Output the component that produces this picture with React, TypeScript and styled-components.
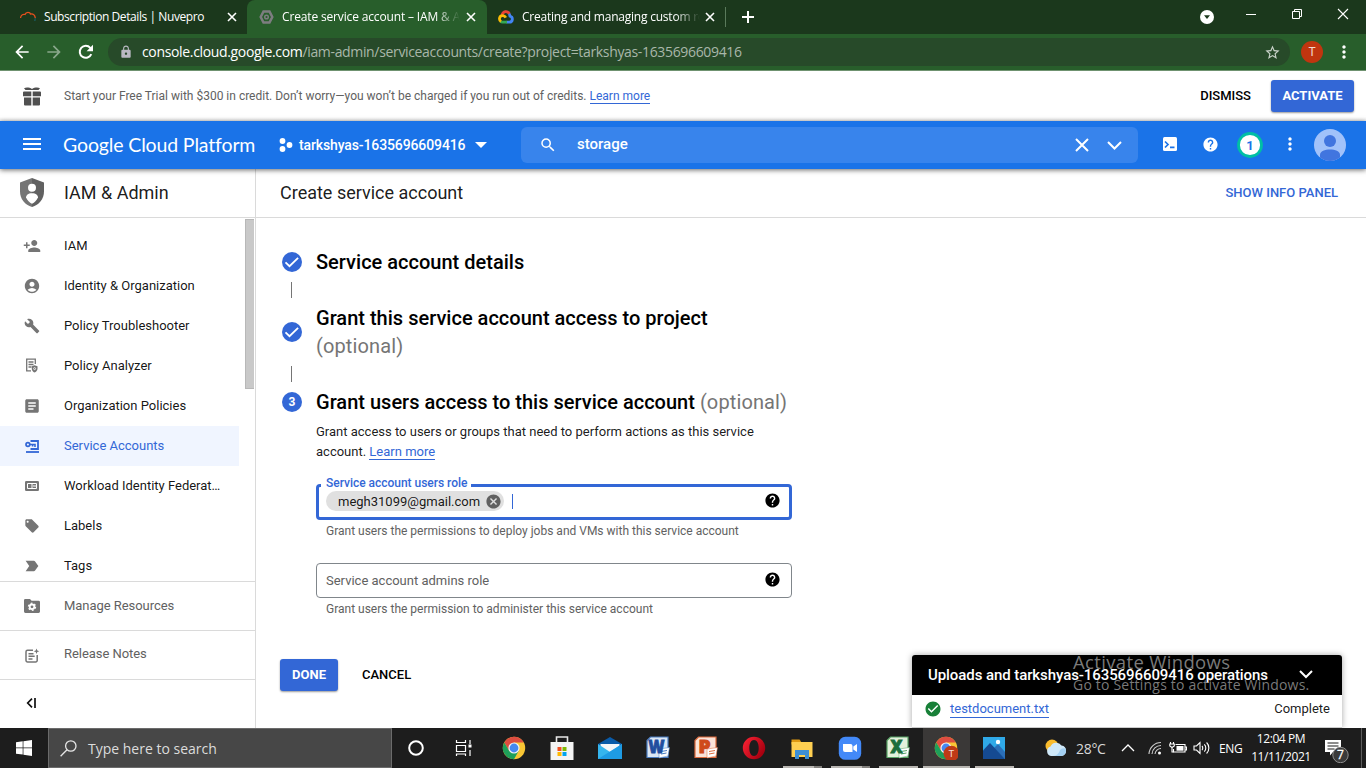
import React from "react";
import styled, { createGlobalStyle, css } from "styled-components";
import {
  MdAccountCircle, MdArticle, MdArrowBack, MdArrowForward, MdBuild, MdCancel, MdCheckCircle,
  MdHelp, MdLabelImportant, MdLocalOffer, MdLock, MdMoreVert, MdPersonAdd,
  MdSearch, MdStarBorder,
} from "react-icons/md";

const blue = "#3367d6";
const ui = `"Open Sans", "Noto Sans", sans-serif`;

const Global = createGlobalStyle`
  * { box-sizing: border-box; }
  body { margin: 0; background: #fff; font-family: Roboto, sans-serif; overflow: hidden; }
  svg { display: block; flex: none; }
`;

const Screen = styled.div`
  position: relative;
  width: 1366px;
  height: 768px;
  display: flex;
  flex-direction: column;
  overflow: hidden;
  white-space: nowrap;
  color: rgba(0, 0, 0, 0.9);
`;

const Label = styled.span<{ $size: number; $ls?: number; $weight?: number; $color?: string; $lift?: number }>`
  font-size: ${(p) => p.$size}px;
  letter-spacing: ${(p) => p.$ls ?? 0}px;
  font-weight: ${(p) => p.$weight ?? 400};
  padding-bottom: ${(p) => p.$lift ?? 0}px;
  ${(p) => p.$color && `color: ${p.$color};`}
`;

/* ---------- browser frame ---------- */
const TabStrip = styled.div`
  height: 34px;
  flex: none;
  display: flex;
  background: #1b381c;
  font-family: ${ui};
  color: #fff;
`;
const Tab = styled.div<{ $width: number; $active?: boolean; $pad: number }>`
  width: ${(p) => p.$width}px;
  height: 34px;
  display: flex;
  align-items: center;
  padding-left: ${(p) => p.$pad}px;
  ${(p) => p.$active && css`background: #285e2b; border-radius: 8px 8px 0 0;`}
`;
const TabTitle = styled.div<{ $width: number; $ls: number; $fade?: boolean }>`
  width: ${(p) => p.$width}px;
  margin-left: 8px;
  overflow: hidden;
  font-size: 12px;
  line-height: 20px;
  letter-spacing: ${(p) => p.$ls}px;
  ${(p) => p.$fade && "mask-image: linear-gradient(90deg, #000 86%, transparent);"}
`;
const TabClose = styled.div<{ $gap?: number }>`
  margin-left: auto;
  margin-right: ${(p) => p.$gap ?? 10}px;
`;
const NewTab = styled.div`
  height: 20px;
  margin-top: 7px;
  border-left: 1px solid #5a7a5b;
  padding: 4px 0 0 16px;
`;
const WindowButtons = styled.div`
  margin-left: auto;
  display: flex;
  align-items: flex-start;
`;
const WindowButton = styled.div<{ $width: number; $top: number }>`
  width: ${(p) => p.$width}px;
  padding-top: ${(p) => p.$top}px;
  display: flex;
  justify-content: center;
`;
const AddressRow = styled.div`
  height: 37px;
  flex: none;
  display: flex;
  align-items: center;
  padding-left: 12px;
  background: #285e2b;
  border-bottom: 1px solid #6f9270;
  color: #fff;
`;
const NavIcon = styled.div<{ $dim?: boolean }>`
  width: 32px;
  opacity: ${(p) => (p.$dim ? 0.45 : 1)};
`;
const UrlBar = styled.div`
  width: 1182px;
  height: 28px;
  border-radius: 14px;
  background: #274a29;
  display: flex;
  align-items: center;
  padding: 0 9px 0 11px;
  font-family: ${ui};
  font-size: 14px;
  color: #a9b7a9;
  b { font-weight: 400; color: #fff; }
`;
const Url = styled.div`
  flex: 1;
  margin-left: 9px;
  padding-bottom: 1px;
  letter-spacing: -0.34px;
`;
const Profile = styled.div`
  width: 22px;
  height: 22px;
  margin: 0 11px;
  border-radius: 50%;
  background: #c0350f;
  color: #f3d9d2;
  font-size: 12px;
  line-height: 22px;
  text-align: center;
`;

/* ---------- promo and product header ---------- */
const Promo = styled.div`
  height: 50px;
  flex: none;
  display: flex;
  align-items: center;
  padding: 0 12px 0 23px;
  background: linear-gradient(#fff 46px, #f1f1f1);
`;
const PromoText = styled.div`
  margin-left: 23px;
  flex: 1;
  font-size: 12px;
  color: #616161;
`;
const Link = styled.span`
  color: ${blue};
  border-bottom: 1px solid ${blue};
`;
const SolidButton = styled.div<{ $width: number }>`
  width: ${(p) => p.$width}px;
  height: 32px;
  border-radius: 3px;
  background: ${blue};
  color: #fff;
  font-size: 13px;
  font-weight: 700;
  line-height: 32px;
  text-align: center;
  box-shadow: 0 1px 2px rgba(0, 0, 0, 0.4);
`;
const Header = styled.div`
  position: relative;
  z-index: 1;
  height: 48px;
  flex: none;
  display: flex;
  align-items: center;
  padding-left: 23px;
  background: #1a73e8;
  color: #fff;
  box-shadow: 0 1px 5px rgba(0, 0, 0, 0.6);
`;
const Lift = styled.div`
  padding-bottom: 2px;
`;
const Brand = styled.div`
  width: 216px;
  margin-left: 22px;
  padding-bottom: 2px;
  font-family: Lato, sans-serif;
  font-size: 19.5px;
  letter-spacing: -0.14px;
`;
const Project = styled.div`
  width: 242px;
  display: flex;
  align-items: center;
`;
const SearchBox = styled.div`
  width: 617px;
  height: 36px;
  border-radius: 6px;
  background: #3884ec;
  display: flex;
  align-items: center;
  padding: 0 15px 0 18px;
`;
const SearchText = styled.div`
  flex: 1;
  margin-left: 20px;
  padding-bottom: 2px;
  font-size: 15px;
  font-weight: 500;
`;
const HeaderIcons = styled.div`
  display: flex;
  padding-left: 12px;
`;
const HeaderIcon = styled.div<{ $lift?: boolean }>`
  width: 40px;
  height: 32px;
  display: flex;
  align-items: center;
  justify-content: center;
  padding-bottom: ${(p) => (p.$lift ? 2 : 0)}px;
`;

/* ---------- body ---------- */
const Body = styled.div`
  flex: 1;
  display: flex;
  min-height: 0;
`;
const Sidebar = styled.div`
  width: 256px;
  border-right: 1px solid #dadada;
  display: flex;
  flex-direction: column;
`;
const SideTitle = styled.div`
  height: 49px;
  flex: none;
  display: flex;
  align-items: center;
  padding: 0 0 1px 20px;
  gap: 20px;
  border-bottom: 1px solid #dadada;
`;
const SideScroll = styled.div`
  height: 363px;
  flex: none;
  display: flex;
  justify-content: space-between;
  overflow: hidden;
`;
const SideList = styled.div`
  width: 239px;
  padding-top: 8px;
`;
const ScrollThumb = styled.div`
  width: 9px;
  height: 170px;
  margin: 1px 1px 0 0;
  background: #c9c9c9;
  border: 1px solid #b8b8b8;
  border-right: 0;
`;
const SideItem = styled.div<{ $active?: boolean }>`
  height: 40px;
  display: flex;
  align-items: center;
  padding-left: 23px;
  color: ${(p) => (p.$active ? blue : "rgba(0,0,0,.92)")};
  background: ${(p) => (p.$active ? "#f0f5ff" : "none")};
  svg { color: ${(p) => (p.$active ? blue : "#757575")}; }
`;
const IconCell = styled.div`
  width: 18px;
  height: 18px;
  margin-right: 23px;
  display: flex;
  align-items: center;
  justify-content: center;
`;
const SideFoot = styled.div`
  height: 49px;
  flex: none;
  display: flex;
  align-items: center;
  padding-left: 23px;
  border-top: 1px solid #dadada;
  color: #616161;
  svg { color: #757575; }
`;
const Main = styled.div`
  flex: 1;
`;
const PageTitle = styled.div`
  height: 49px;
  display: flex;
  align-items: center;
  justify-content: space-between;
  padding: 0 28px 2px 24px;
  border-bottom: 1px solid #dadada;
`;
const Steps = styled.div`
  padding: 30px 0 0 26px;
  width: 536px;
`;
const Step = styled.div`
  display: flex;
  align-items: center;
  gap: 14px;
`;
const StepTitle = styled.div`
  font-size: 20px;
  line-height: 28px;
  font-weight: 500;
  letter-spacing: 0.01px;
  color: #000;
  span { color: #757575; font-weight: 400; letter-spacing: 0.12px; }
`;
const StepNumber = styled.div`
  width: 20px;
  height: 20px;
  border-radius: 50%;
  background: ${blue};
  color: #fff;
  font-size: 12px;
  font-weight: 700;
  line-height: 20px;
  text-align: center;
`;
const Connector = styled.div`
  width: 1px;
  height: 16px;
  margin: 6px 0 6px 9px;
  background: #757575;
`;
const StepBody = styled.div`
  padding: 6px 0 0 34px;
`;
const Description = styled.div`
  font-size: 13px;
  line-height: 20px;
`;
const Field = styled.div<{ $focus?: boolean }>`
  position: relative;
  height: ${(p) => (p.$focus ? 36 : 35)}px;
  margin-top: ${(p) => (p.$focus ? 22 : 24)}px;
  border: ${(p) => (p.$focus ? `3px solid ${blue}` : "1px solid #80868b")};
  border-radius: 4px;
  display: flex;
  align-items: center;
  padding: ${(p) => (p.$focus ? "0 8px 2px 7px" : "0 10px 1px 9px")};
`;
const FloatingLabel = styled.div`
  position: absolute;
  left: 2px;
  top: -12px;
  padding: 0 4px 0 5px;
  background: #fff;
  color: ${blue};
  font-size: 12px;
  font-weight: 500;
  line-height: 16px;
  letter-spacing: -0.02px;
`;
const Chip = styled.div`
  width: 178px;
  height: 20px;
  border-radius: 10px;
  background: #e0e0e0;
  display: flex;
  align-items: center;
  justify-content: space-between;
  padding: 0 2px 0 12px;
  font-size: 13px;
`;
const Caret = styled.div`
  width: 1px;
  height: 15px;
  margin-left: 8px;
  background: ${blue};
`;
const FieldEnd = styled.div`
  margin-left: auto;
  padding: 0 0.5px 1px 0;
  color: #000;
`;
const Helper = styled.div`
  margin-top: 3px;
  padding-left: 10px;
  height: 16px;
  font-size: 12px;
  line-height: 16px;
  color: #616161;
`;
const Actions = styled.div`
  display: flex;
  align-items: center;
  gap: 24px;
  padding: 42px 0 0 24px;
`;

/* ---------- notification panel ---------- */
const Panel = styled.div`
  position: absolute;
  left: 912px;
  top: 655px;
  width: 430px;
  height: 73px;
  border-radius: 3px 3px 0 0;
  background: #fff;
  border-bottom: 1px solid #ccc;
  box-shadow: 0 0 6px rgba(0, 0, 0, 0.35);
  overflow: hidden;
`;
const PanelHead = styled.div`
  height: 40px;
  background: #000;
  color: #fff;
  display: flex;
  align-items: center;
  justify-content: space-between;
  padding: 0 28px 0 16px;
`;
const PanelRow = styled.div`
  height: 27px;
  display: flex;
  align-items: center;
  padding: 0 12px;
  font-size: 13px;
`;
const FileLink = styled(Link)`
  margin: 2px auto 0 8px;
  line-height: 16px;
`;
const Watermark = styled.div`
  position: absolute;
  left: 1073px;
  top: 650px;
  font-family: ${ui};
  color: rgba(145, 145, 145, 0.85);
  display: flex;
  flex-direction: column;
  line-height: 23px;
`;

/* ---------- taskbar ---------- */
const Taskbar = styled.div`
  position: relative;
  height: 40px;
  flex: none;
  display: flex;
  background: #1d1d1d;
  color: #fff;
  font-family: ${ui};
`;
const Start = styled.div`
  width: 48px;
  display: flex;
  align-items: center;
  justify-content: center;
`;
const TaskSearch = styled.div`
  width: 344px;
  border: 1px solid #6b6b6b;
  background: #474747;
  display: flex;
  align-items: center;
  gap: 11px;
  padding-left: 11px;
  color: #dcdcdc;
`;
const Apps = styled.div`
  display: flex;
  flex: 1;
`;
const TaskApp = styled.div<{ $active?: boolean; $gap?: number }>`
  width: 48px;
  height: 40px;
  margin-left: ${(p) => p.$gap ?? 0}px;
  display: flex;
  flex-direction: column;
  align-items: center;
  justify-content: space-between;
  padding-top: 8px;
  ${(p) => p.$active && "background: linear-gradient(90deg, transparent 1px, #3a3837 1px);"}
`;
const Running = styled.div<{ $width: number; $more?: boolean }>`
  width: ${(p) => p.$width}px;
  height: 2px;
  background: ${(p) => (p.$more ? "linear-gradient(90deg, #b9b6b2 31px, #82807d 31px)" : "#b9b6b2")};
`;
const Tray = styled.div`
  width: 328px;
  display: flex;
  align-items: center;
  padding-left: 6px;
`;
const TrayCell = styled.div<{ $width: number }>`
  width: ${(p) => p.$width}px;
  flex: none;
`;
const Spacer = styled.div<{ $width: number }>`
  width: ${(p) => p.$width}px;
  flex: none;
`;
const Clock = styled.div`
  width: 68px;
  text-align: center;
  font-size: 12px;
  line-height: 18px;
  letter-spacing: -0.4px;
  margin-bottom: 1px;
`;
const Notifications = styled.div`
  padding-top: 3px;
`;
const ShowDesktop = styled.div`
  width: 5px;
  height: 40px;
  margin-left: auto;
  border-left: 1px solid #5c5c5c;
`;

/* ---------- drawings ---------- */
const Cross = ({ s = 8, w = 1.6 }: { s?: number; w?: number }) => (
  <svg width={s + 2} height={s + 2} viewBox={`-1 -1 ${s + 2} ${s + 2}`}>
    <path d={`M0 0L${s} ${s}M${s} 0L0 ${s}`} stroke="currentColor" strokeWidth={w} />
  </svg>
);
const Chevron = ({ w = 12, sw = 2, up = false }: { w?: number; sw?: number; up?: boolean }) => (
  <svg width={w + 4} height={w / 2 + 4} viewBox={`-2 -2 ${w + 4} ${w / 2 + 4}`}>
    <path d={up ? `M0 ${w / 2}L${w / 2} 0L${w} ${w / 2}` : `M0 0L${w / 2} ${w / 2}L${w} 0`} fill="none" stroke="currentColor" strokeWidth={sw} />
  </svg>
);
const Reload = () => (
  <svg width="20" height="20" viewBox="0 0 20 20">
    <path d="M15.300 12.200A6 6 0 1 1 14.300 5.900L15.500 7.200" fill="none" stroke="#fff" strokeWidth="2" />
    <path d="M17 2.800v6.400h-6.400z" fill="#fff" />
  </svg>
);
const CloudLogo = () => (
  <svg width="16" height="14" viewBox="0 0 16 14" fill="none" strokeWidth="2.8">
    <path d="M4 5.2C5 1 9.5.3 11.5 4" stroke="#ea4335" />
    <path d="M11 3.8c1 1.2.8 1.6 1 2.4 3.4 1 3 5.8-.6 6H8.5" stroke="#4285f4" />
    <path d="M9 12.2H4.5C3.6 12.2 3 11.9 2.6 11.5" stroke="#34a853" />
    <path d="M3 11.6C.4 9.8 1.4 5.7 4.6 5.7c1.7 0 2.6.9 3.2 2" stroke="#fbbc05" />
  </svg>
);
const Gift = () => (
  <svg width="18" height="19" viewBox="0 0 18 19" fill="#505050">
    <path d="M1 1.2C3 .2 6.500 .3 9 2C11.500 .3 15 .2 17 1.2L15.500 3H2.500z" />
    <path d="M1 4.500h7.300v4.700H0V5.500a1 1 0 0 1 1-1zM9.700 4.500H17a1 1 0 0 1 1 1v3.700H9.700zM1 10.500h7.300v8H2a1 1 0 0 1-1-1zM9.700 10.500H17v7a1 1 0 0 1-1 1H9.700z" />
  </svg>
);
const Shield = () => (
  <svg width="24" height="29" viewBox="0 0 24 29">
    <path d="M12 0L0 4.500v9C0 21 5 27 12 29z" fill="#757575" />
    <path d="M12 0l12 4.500v9C24 21 19 27 12 29z" fill="#616161" />
    <circle cx="12" cy="9.800" r="4" fill="#fff" />
    <path d="M12 15.200c4 0 6 2 6 4.300-1.300 3-3.500 5-6 6.300-2.500-1.300-4.700-3.300-6-6.300 0-2.300 2-4.300 6-4.300z" fill="#fff" />
  </svg>
);
const PolicyDoc = () => (
  <svg width="14" height="16" viewBox="0 0 14 16" fill="none" stroke="currentColor" strokeWidth="1.300">
    <path d="M10.300 6V1.200H1.700v11.600H6M3.500 4h5M3.500 6.500h5M3.500 9h3" />
    <path d="M9.500 7.300l3 1v2.500c0 1.900-1.400 3.100-3 3.800-1.500-.7-2.700-1.900-2.700-3.800V8.300z" fill="currentColor" stroke="none" />
    <circle cx="9.600" cy="10.600" r="1" stroke="#fff" strokeWidth=".8" />
  </svg>
);
const KeyCard = () => (
  <svg width="14" height="14" viewBox="0 0 14 14" fill="none" stroke="currentColor">
    <path d="M5.500 2H13v8H5.500" strokeWidth="1.800" />
    <circle cx="2.900" cy="5.500" r="1.900" strokeWidth="1.700" />
    <path d="M4.700 5.500H10.800M10 5.500v2.500M7.600 5.500v1.900" strokeWidth="1.600" />
    <path d="M1 13h13" strokeWidth="1.800" />
  </svg>
);
const IdCard = () => (
  <svg width="14" height="10" viewBox="0 0 14 10">
    <rect width="14" height="10" rx="1.300" fill="currentColor" />
    <path d="M2.500 2.500h4.500v5H2.500zM7 2.500h4.500v5H7M8 5h3.500" fill="none" stroke="#fff" />
  </svg>
);
const FolderGear = () => (
  <svg width="16" height="14" viewBox="0 0 16 14">
    <path d="M1.300 0H6l1.600 1.700h7A1.400 1.400 0 0 1 16 3v9.600A1.400 1.400 0 0 1 14.600 14H1.400A1.400 1.400 0 0 1 0 12.600V1.300A1.300 1.300 0 0 1 1.300 0z" fill="currentColor" />
    <circle cx="8" cy="7.800" r="2.300" fill="none" stroke="#fff" strokeWidth="1.800" />
    <circle cx="8" cy="7.800" r="3.600" fill="none" stroke="#fff" strokeWidth="1.200" strokeDasharray="1.900 1.870" />
  </svg>
);
const Notes = () => (
  <svg width="15" height="15" viewBox="0 0 15 15" fill="none" stroke="currentColor" strokeWidth="1.500">
    <path d="M8 2.300H2.500A1.500 1.500 0 0 0 1 3.800v8.700A1.500 1.500 0 0 0 2.500 14h8.200a1.500 1.500 0 0 0 1.500-1.500V7M3.500 5.700h5M3.500 8.300h6.200M3.500 10.900h4" />
    <path d="M11.500 .4l.8 2 2 .8-2 .8-.8 2-.8-2-2-.8 2-.8z" fill="currentColor" stroke="none" />
  </svg>
);
const StepCheck = () => (
  <svg width="20" height="20" viewBox="0 0 20 20">
    <circle cx="10" cy="10" r="10" fill={blue} />
    <path d="M3.500 10.300l4 3.900 8.600-8.400" fill="none" stroke="#fff" strokeWidth="1.800" />
  </svg>
);
const ChromeLogo = ({ badge = false }: { badge?: boolean }) => (
  <svg width="24" height="24" viewBox="0 0 24 24">
    <circle cx="12" cy="12" r="11.200" fill="#f9c634" />
    <path d="M12 12L2.300 6.400A11.200 11.200 0 0 1 21.700 6.400H12z" fill="#dd4d41" />
    <path d="M2.300 6.400L7.150 14.800 12 12V6.400z" fill="#dd4d41" />
    <path d="M2.300 6.400A11.200 11.200 0 0 0 12 23.200L16.800 14.800H7.150z" fill="#1e9f5a" />
    <circle cx="12" cy="12" r="5.600" fill="#f2f2f2" />
    <circle cx="12" cy="12" r="4.400" fill="#4688f1" />
    {badge && (
      <>
        <circle cx="17.300" cy="17.500" r="7.800" fill="#bf3a16" />
        <text x="17.300" y="21" fontSize="9.500" fill="#f5dcd4" textAnchor="middle" fontFamily="Roboto">T</text>
      </>
    )}
  </svg>
);
const Store = () => (
  <svg width="24" height="24" viewBox="0 0 24 24">
    <path d="M6.500 7V1h11v6" fill="none" stroke="#e8e8e8" strokeWidth="1.600" />
    <path d="M.5 6h23v18H.5z" fill="#f4f4f4" />
    <path d="M7.500 11h4v4h-4z" fill="#f25022" /><path d="M12.500 11h4v4h-4z" fill="#7fba00" />
    <path d="M7.500 16h4v4h-4z" fill="#ffb900" /><path d="M12.500 16h4v4h-4z" fill="#00a4ef" />
  </svg>
);
const Mail = () => (
  <svg width="24" height="24" viewBox="0 0 24 24">
    <path d="M0 8L12 1l12 7v15H0z" fill="#0a5ba8" />
    <path d="M2.500 8h19v9h-19z" fill="#f4f6f8" />
    <path d="M0 8l12 8 12-8v15H0z" fill="#35b5ee" />
    <path d="M0 23L24 8v15z" fill="#1e9be4" />
  </svg>
);
const OfficeTile = ({ letter, color, edge, pale }: { letter: string; color: string; edge: string; pale: string }) => (
  <svg width="24" height="24" viewBox="0 0 24 24">
    <path d="M4.500 1h17.500v20.500H1V4.500z" fill={pale} stroke={edge} strokeWidth="1.200" />
    <path d="M13 13l10.500-1.500L22 20l-9 2z" fill="#fff" stroke={edge} strokeWidth=".5" />
    <path d="M15 15.500l6-1M15 18l5.500-1" stroke={edge} strokeWidth="1" />
    <text x="10.500" y="17" fontSize="17" fontWeight="800" fill={color} stroke={color} strokeWidth=".9" textAnchor="middle" fontFamily="Open Sans" textLength={letter === "W" ? 16 : 12} lengthAdjust="spacingAndGlyphs">{letter}</text>
  </svg>
);
const Opera = () => (
  <svg width="24" height="24" viewBox="0 0 24 24">
    <defs><linearGradient id="op" x2="1" y2=".6"><stop stopColor="#ff2436" /><stop offset="1" stopColor="#a5000f" /></linearGradient></defs>
    <path fillRule="evenodd" d="M12 .8a11.200 11.200 0 1 0 0 22.400A11.200 11.200 0 0 0 12 .8zM12 4c2.900 0 4.700 3.500 4.700 8S14.900 20 12 20s-4.700-3.500-4.700-8S9.100 4 12 4z" fill="url(#op)" />
  </svg>
);
const Explorer = () => (
  <svg width="24" height="24" viewBox="0 0 24 24">
    <path d="M1.500 3.500h8l1.500 2v3H1.500z" fill="#e09a13" />
    <path d="M1.500 6h21v15h-21z" fill="#ffcf51" />
    <path d="M5 14h14v9h-4v-4H9v4H5z" fill="#3d8fd6" />
  </svg>
);
const ZoomLogo = () => (
  <svg width="24" height="24" viewBox="0 0 24 24">
    <rect x=".8" y=".8" width="22.400" height="23" rx="6.500" fill="#4389f8" />
    <path d="M5 8h7.500a2 2 0 0 1 2 2v6H7a2 2 0 0 1-2-2zM15.300 10.500L19 8v8l-3.700-2.500z" fill="#fff" />
  </svg>
);
const Photos = () => (
  <svg width="24" height="24" viewBox="0 0 24 24">
    <path d="M1 1h22v22H1z" fill="#2fa9e8" />
    <path d="M12 12l4-4 7 8v7z" fill="#2b6fb8" />
    <path d="M1 14.500l7-7.500 15 16H1z" fill="#154a92" />
    <circle cx="16" cy="6" r="2.200" fill="#fff" />
  </svg>
);
const Weather = () => (
  <svg width="24" height="20" viewBox="0 0 24 20">
    <circle cx="8" cy="8" r="6.500" fill="#f9bb2d" />
    <path d="M7 18a5 5 0 0 1-.5-9.600A6.300 6.300 0 0 1 17.500 7.500a5.300 5.300 0 0 1 0 10.500z" fill="#cfe8f9" />
    <path d="M9 18a8 8 0 0 0 7-6 5 5 0 0 1 5.500-1.500A5.300 5.300 0 0 1 17.500 18z" fill="#a3d0f2" />
  </svg>
);

const navItems: [string, React.ReactNode][] = [
  ["IAM", <MdPersonAdd size={18} />],
  ["Identity & Organization", <MdAccountCircle size={18} viewBox="-0.500 -0.500 25 25" />],
  ["Policy Troubleshooter", <MdBuild size={16} />],
  ["Policy Analyzer", <PolicyDoc />],
  ["Organization Policies", <MdArticle size={18} />],
  ["Service Accounts", <KeyCard />],
  ["Workload Identity Federat…", <IdCard />],
  ["Labels", <MdLocalOffer size={16} />],
  ["Tags", <MdLabelImportant size={18} />],
];

export default function App() {
  return (
    <>
      <Global />
      <Screen>
        <TabStrip>
          <Tab $width={247} $pad={20}>
            <svg width="16" height="14" viewBox="0 0 16 14" fill="none" strokeWidth="1.300">
              <path d="M.5 8C1 4.500 3.500 4 5 4.500 6 1.500 10 2 10.500 4c3-.3 4.500 2 4.800 4" stroke="#e8501e" />
              <path d="M15.300 8l-.5 3" stroke="#1c5b5e" />
            </svg>
            <TabTitle $width={170} $ls={-0.42}>Subscription Details | Nuvepro</TabTitle>
            <TabClose><Cross /></TabClose>
          </Tab>
          <Tab $width={240} $active $pad={12}>
            <svg width="15" height="14" viewBox="0 0 15 14" fill="none" stroke="#7d7d80">
              <path d="M4.500 1.500h6L13.300 7l-2.800 5.500h-6L1.700 7z" strokeWidth="2.500" />
              <circle cx="7.500" cy="7" r="1.800" strokeWidth="1.500" />
            </svg>
            <TabTitle $width={178} $ls={-0.15} $fade>Create service account – IAM &amp; Admin</TabTitle>
            <TabClose $gap={11}><Cross /></TabClose>
          </Tab>
          <Tab $width={238} $pad={11}>
            <CloudLogo />
            <TabTitle $width={178} $ls={-0.22} $fade>Creating and managing custom roles</TabTitle>
            <TabClose><Cross /></TabClose>
          </Tab>
          <NewTab>
            <svg width="12" height="12" viewBox="0 0 12 12"><path d="M6 0v12M0 6h12" stroke="#fff" strokeWidth="2" /></svg>
          </NewTab>
          <WindowButtons>
            <WindowButton $width={42} $top={10}>
              <svg width="14" height="14" viewBox="0 0 14 14"><circle cx="7" cy="7" r="7" fill="#fff" /><path d="M4 5.200h6L7 9z" fill="#1b381c" /></svg>
            </WindowButton>
            <WindowButton $width={46} $top={14}>
              <svg width="10" height="1"><path d="M0 .5h10" stroke="#fff" /></svg>
            </WindowButton>
            <WindowButton $width={46} $top={9}>
              <svg width="10" height="10" viewBox="0 0 10 10"><path d="M.5 2.500h7v7h-7zM2.500 2.500v-2h7v7h-2" fill="none" stroke="#fff" /></svg>
            </WindowButton>
            <WindowButton $width={46} $top={8}><Cross s={10} w={1.1} /></WindowButton>
          </WindowButtons>
        </TabStrip>

        <AddressRow>
          <NavIcon><MdArrowBack size={20} /></NavIcon>
          <NavIcon $dim><MdArrowForward size={20} /></NavIcon>
          <NavIcon><Reload /></NavIcon>
          <UrlBar>
            <MdLock size={14} color="#b9b9c2" />
            <Url><b>console.cloud.google.com</b>/iam-admin/serviceaccounts/create?project=tarkshyas-1635696609416</Url>
            <MdStarBorder size={17} color="#c9d2c9" />
          </UrlBar>
          <Profile>T</Profile>
          <MdMoreVert size={20} />
        </AddressRow>

        <Promo>
          <Gift />
          <PromoText>
            Start your Free Trial with $300 in credit. Don’t worry—you won’t be charged if you run out of credits. <Link>Learn more</Link>
          </PromoText>
          <Label $size={13} $weight={500} $color="#000" $lift={2}>DISMISS</Label>
          <Spacer $width={20} />
          <SolidButton $width={83}>ACTIVATE</SolidButton>
        </Promo>

        <Header>
          <Lift><svg width="18" height="12" viewBox="0 0 18 12"><path d="M0 1h18M0 6h18M0 11h18" stroke="#fff" strokeWidth="2" /></svg></Lift>
          <Brand>Google Cloud Platform</Brand>
          <Project>
            <svg width="14" height="14" viewBox="0 0 14 14" fill="#fff"><circle cx="3.500" cy="3" r="2.900" /><circle cx="3.500" cy="11" r="2.900" /><circle cx="10.500" cy="7" r="2.900" /></svg>
            <Spacer $width={6} />
            <Label $size={14} $weight={500} $ls={-0.12}>tarkshyas-1635696609416</Label>
            <Spacer $width={10} />
            <svg width="12" height="6" viewBox="0 0 12 6"><path d="M0 0h12L6 6z" fill="#fff" /></svg>
          </Project>
          <SearchBox>
            <MdSearch size={18} />
            <SearchText>storage</SearchText>
            <Cross s={12} w={2} />
            <Spacer $width={17} />
            <Chevron w={13} />
          </SearchBox>
          <HeaderIcons>
            <HeaderIcon $lift>
              <svg width="14" height="14" viewBox="0 0 14 14"><rect width="14" height="14" rx="1.500" fill="#fff" /><path d="M2 4.500L5 7.500l-3 3M7 10.300h4.500" fill="none" stroke="#1a73e8" strokeWidth="1.700" /></svg>
            </HeaderIcon>
            <HeaderIcon $lift><MdHelp size={17} /></HeaderIcon>
            <HeaderIcon>
              <svg width="26" height="26" viewBox="0 0 26 26">
                <circle cx="13" cy="13" r="11.500" fill="#fff" stroke="#00bfa5" strokeWidth="2.800" />
                <text x="13" y="17.500" textAnchor="middle" fontSize="13" fontWeight="700" fontFamily="Roboto" fill="#1a73e8">1</text>
              </svg>
            </HeaderIcon>
            <HeaderIcon $lift><MdMoreVert size={20} /></HeaderIcon>
            <HeaderIcon>
              <svg width="32" height="32" viewBox="0 0 32 32">
                <clipPath id="av"><circle cx="16" cy="16" r="16" /></clipPath>
                <g clipPath="url(#av)"><path d="M0 0h32v32H0z" fill="#a1c2fa" /><circle cx="16" cy="12" r="6" fill="#4175df" /><path d="M6 32v-6c0-4 5-5.500 10-5.500S26 22 26 26v6z" fill="#4175df" /></g>
              </svg>
            </HeaderIcon>
          </HeaderIcons>
        </Header>

        <Body>
          <Sidebar>
            <SideTitle><Shield /><Label $size={18} $lift={1}>IAM &amp; Admin</Label></SideTitle>
            <SideScroll>
              <SideList>
                {navItems.map(([text, icon]) => (
                  <SideItem key={text} $active={text === "Service Accounts"}>
                    <IconCell>{icon}</IconCell>
                    <Label $size={13} $lift={2}>{text}</Label>
                  </SideItem>
                ))}
              </SideList>
              <ScrollThumb />
            </SideScroll>
            <SideFoot><IconCell><FolderGear /></IconCell><Label $size={13} $lift={2} $ls={-0.05}>Manage Resources</Label></SideFoot>
            <SideFoot><IconCell><Notes /></IconCell><Label $size={13} $lift={4} $ls={-0.05}>Release Notes</Label></SideFoot>
            <SideFoot>
              <Lift><svg width="16" height="10" viewBox="0 0 16 10"><path d="M9 .7L4.700 5 9 9.300M12 0v10" fill="none" stroke="#111" strokeWidth="1.700" /></svg></Lift>
            </SideFoot>
          </Sidebar>
          <Main>
            <PageTitle>
              <Label $size={18}>Create service account</Label>
              <Label $size={13} $weight={500} $color={blue}>SHOW INFO PANEL</Label>
            </PageTitle>
            <Steps>
              <Step><StepCheck /><StepTitle>Service account details</StepTitle></Step>
              <Connector />
              <Step><StepCheck /><StepTitle>Grant this service account access to project<br /><span>(optional)</span></StepTitle></Step>
              <Connector />
              <Step><StepNumber>3</StepNumber><StepTitle>Grant users access to this service account <span>(optional)</span></StepTitle></Step>
              <StepBody>
                <Description>
                  Grant access to users or groups that need to perform actions as this service<br />account. <Link>Learn more</Link>
                </Description>
                <Field $focus>
                  <FloatingLabel>Service account users role</FloatingLabel>
                  <Chip>megh31099@gmail.com<MdCancel size={17} color="#616161" /></Chip>
                  <Caret />
                  <FieldEnd><MdHelp size={17} /></FieldEnd>
                </Field>
                <Helper>Grant users the permissions to deploy jobs and VMs with this service account</Helper>
                <Field>
                  <Label $size={13} $color="#616161">Service account admins role</Label>
                  <FieldEnd><MdHelp size={17} /></FieldEnd>
                </Field>
                <Helper>Grant users the permission to administer this service account</Helper>
              </StepBody>
            </Steps>
            <Actions>
              <SolidButton $width={58}>DONE</SolidButton>
              <Label $size={13} $weight={500} $color="#000" $lift={2}>CANCEL</Label>
            </Actions>
          </Main>
        </Body>

        <Panel>
          <PanelHead><Label $size={15} $weight={500} $ls={-0.08}>Uploads and tarkshyas-1635696609416 operations</Label><Lift><Chevron w={12} /></Lift></PanelHead>
          <PanelRow><MdCheckCircle size={18} color="#188038" /><FileLink>testdocument.txt</FileLink>Complete</PanelRow>
        </Panel>
        <Watermark>
          <Label $size={18.5} $ls={0.35}>Activate Windows</Label>
          <Label $size={14} $ls={0.2}>Go to Settings to activate Windows.</Label>
        </Watermark>

        <Taskbar>
          <Start>
            <svg width="16" height="16" viewBox="0 0 16 16" fill="#fff"><path d="M0 2.200l6.700-.9v6.200H0zM7.400 1.200L16 0v7.500H7.400zM0 8.300h6.700v6.300L0 13.700zM7.400 8.300H16V16l-8.600-1.200z" /></svg>
          </Start>
          <TaskSearch>
            <svg width="17" height="17" viewBox="0 0 17 17" fill="none" stroke="#e6e6e6" strokeWidth="1.300"><circle cx="10.800" cy="6" r="5.200" /><path d="M7 9.800L.6 16.300" /></svg>
            <Label $size={14}>Type here to search</Label>
          </TaskSearch>
          <Apps>
            <TaskApp><svg width="24" height="24" viewBox="0 0 24 24"><circle cx="12" cy="12" r="6.800" fill="none" stroke="#fff" strokeWidth="2" /></svg></TaskApp>
            <TaskApp>
              <svg width="24" height="24" viewBox="0 0 24 24" fill="none" stroke="#fff" strokeWidth="1.200"><path d="M4.500 4v2.500h9V4M4.500 9.500h9v6h-9zM4.500 20v-2h9v2M18 4v4M18 14v6" /><path d="M16.500 8.500h3v3h-3z" fill="#fff" stroke="none" /></svg>
            </TaskApp>
            <TaskApp $gap={2}><ChromeLogo /></TaskApp>
            <TaskApp><Store /></TaskApp>
            <TaskApp><Mail /></TaskApp>
            <TaskApp><OfficeTile letter="W" color="#1f4e9e" edge="#4a7cc0" pale="#dbe7f5" /></TaskApp>
            <TaskApp><OfficeTile letter="P" color="#cf4a1c" edge="#dd6a3c" pale="#fae3d8" /></TaskApp>
            <TaskApp><Opera /></TaskApp>
            <TaskApp><Explorer /><Running $width={39} $more /></TaskApp>
            <TaskApp><ZoomLogo /><Running $width={39} $more /></TaskApp>
            <TaskApp><OfficeTile letter="X" color="#1d6e3c" edge="#5aa568" pale="#e3f1dc" /><Running $width={39} /></TaskApp>
            <TaskApp $active><ChromeLogo badge /><Running $width={47} /></TaskApp>
            <TaskApp><Photos /><Running $width={39} /></TaskApp>
          </Apps>
          <Tray>
            <TrayCell $width={32}><Weather /></TrayCell>
            <TrayCell $width={44}><Label $size={14} $ls={-0.3} $color="#d8d8d8">28°C</Label></TrayCell>
            <TrayCell $width={28}><Chevron w={12} sw={1.3} up /></TrayCell>
            <TrayCell $width={21}>
              <svg width="14" height="14" viewBox="0 0 14 14" fill="none" stroke="#cfcfcf" strokeWidth="1.100"><path d="M1 13A12 12 0 0 1 13 1.500M4 13a9 9 0 0 1 9-8.500M7 13a6 6 0 0 1 6-5.500" /><circle cx="11.500" cy="12" r="1.500" fill="#fff" stroke="none" /></svg>
            </TrayCell>
            <TrayCell $width={24}>
              <svg width="18" height="14" viewBox="0 0 18 14" fill="none" stroke="#fff" strokeWidth="1.100"><path d="M6.500 3.500h9.500v7.500H4.500V8M16.500 6h1v3h-1" /><path d="M7.500 5h7v4.700h-7z" fill="#fff" stroke="none" /><path d="M1.500 1v2M4.500 1v2M.8 3h4.500v2L3 6.500.8 5zM3 6.500V11h1.500" /></svg>
            </TrayCell>
            <TrayCell $width={26}>
              <svg width="17" height="14" viewBox="0 0 17 14" fill="none" stroke="#fff" strokeWidth="1.100"><path d="M1 5h2.500L7 1.500v11L3.500 9H1zM9 5c1 1 1 3 0 4M11.300 3.300c2 2 2 5.400 0 7.400M13.600 1.500c3 3 3 8 0 11" /></svg>
            </TrayCell>
            <TrayCell $width={28}><Lift><Label $size={12} $ls={-0.3}>ENG</Label></Lift></TrayCell>
            <Clock>12:04 PM<br />11/11/2021</Clock>
            <Spacer $width={10} />
            <Notifications>
              <svg width="26" height="26" viewBox="0 0 26 26">
                <path d="M0 3h16v12H8l-3 3.500V15H0z" fill="#fff" />
                <path d="M2.500 6h11M2.500 9h11M2.500 12h7" stroke="#1d1d1d" strokeWidth="1.200" />
                <circle cx="15.500" cy="18" r="7.700" fill="#3a3a3a" stroke="#8d8d8d" />
                <text x="15.500" y="22.300" textAnchor="middle" fontSize="12" fill="#fff" stroke="#fff" strokeWidth=".3" fontFamily="Open Sans">7</text>
              </svg>
            </Notifications>
            <ShowDesktop />
          </Tray>
        </Taskbar>
      </Screen>
    </>
  );
}
